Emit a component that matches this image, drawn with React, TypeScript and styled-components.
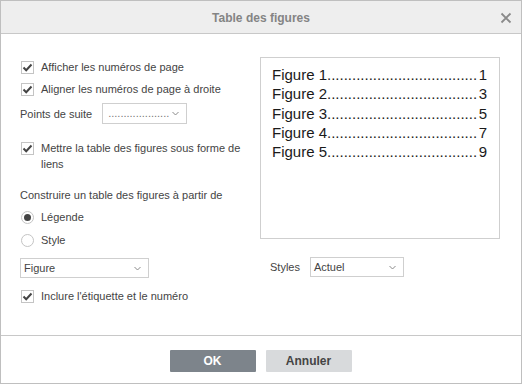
import React from "react";
import styled, { createGlobalStyle } from "styled-components";

const GlobalStyle = createGlobalStyle`
  html, body {
    margin: 0;
    padding: 0;
    background: #ffffff;
  }
  * {
    box-sizing: border-box;
  }
`;

const Dialog = styled.div`
  width: 522px;
  height: 384px;
  border: 1px solid #bfbfbf;
  display: flex;
  flex-direction: column;
  font-family: "Liberation Sans", Arial, sans-serif;
  font-size: 11px;
  color: #444444;
  background: #ffffff;
`;

const Header = styled.div`
  height: 33px;
  flex: none;
  background: #eeeeee;
  border-bottom: 1px solid #c8c8c8;
  position: relative;
  display: flex;
  align-items: center;
  justify-content: center;
`;

const Title = styled.div`
  font-size: 12px;
  font-weight: bold;
  color: #848484;
  margin-top: 2px;
`;

const CloseButton = styled.div`
  position: absolute;
  right: 9px;
  top: 11px;
  width: 12px;
  height: 12px;
  display: flex;
`;

const Body = styled.div`
  flex: 1;
  display: flex;
  padding: 23px 0 0 19px;
`;

const LeftColumn = styled.div`
  width: 240px;
  display: flex;
  flex-direction: column;
`;

const RightColumn = styled.div`
  width: 240px;
  display: flex;
  flex-direction: column;
`;

const Row = styled.div<{ $top?: number; $h?: number }>`
  display: flex;
  align-items: center;
  height: ${(p) => p.$h ?? 20}px;
  margin-top: ${(p) => p.$top ?? 0}px;
`;

const MultiRow = styled.div<{ $top?: number }>`
  display: flex;
  align-items: flex-start;
  margin-top: ${(p) => p.$top ?? 0}px;
`;

const Box = styled.span<{ $offset?: number }>`
  width: 13px;
  height: 13px;
  flex: none;
  border: 1px solid #c4c4c4;
  background: #ffffff;
  margin: ${(p) => p.$offset ?? 0}px 7px 0 1px;
  display: flex;
  align-items: center;
  justify-content: center;
`;

const Radio = styled.span`
  width: 13px;
  height: 13px;
  flex: none;
  border: 1px solid #c4c4c4;
  border-radius: 50%;
  background: #ffffff;
  margin-left: 1px;
  margin-right: 7px;
  display: flex;
  align-items: center;
  justify-content: center;
`;

const RadioDot = styled.span`
  width: 7px;
  height: 7px;
  border-radius: 50%;
  background: #444444;
`;

const LabelText = styled.span`
  line-height: 16px;
`;

const MultiText = styled.span`
  line-height: 16px;
  margin-top: -1px;
`;

const Caption = styled.div<{ $top?: number }>`
  line-height: 16px;
  margin-top: ${(p) => p.$top ?? 0}px;
`;

const FieldLabel = styled.span`
  margin-right: 10px;
`;

const Combo = styled.div<{ $w: number; $h?: number }>`
  width: ${(p) => p.$w}px;
  height: ${(p) => p.$h ?? 20}px;
  border: 1px solid #cfcfcf;
  background: #ffffff;
  display: flex;
  align-items: center;
  padding: 0 7px 0 3px;
  font-size: 11px;
  color: #444444;
`;

const ComboValue = styled.span`
  flex: 1;
  white-space: nowrap;
`;

const Leader = styled.span`
  flex: 1;
  color: #777777;
  padding-left: 2px;
  white-space: nowrap;
  margin-top: -1px;
`;

const Preview = styled.div`
  width: 240px;
  height: 182px;
  border: 1px solid #cfcfcf;
  padding: 7px 12px 0 11px;
  font-size: 15px;
  color: #1a1a1a;
`;

const PreviewLine = styled.div`
  display: flex;
  line-height: 19.3px;
  white-space: nowrap;
`;

const Dots = styled.span`
  flex: 1;
  white-space: nowrap;
`;

const StylesRow = styled.div`
  display: flex;
  align-items: center;
  height: 20px;
  margin-top: 18px;
  padding-left: 10px;
`;

const Footer = styled.div`
  height: 48px;
  flex: none;
  border-top: 1px solid #c8c8c8;
  display: flex;
  justify-content: center;
  align-items: flex-start;
  gap: 10px;
  padding-top: 14px;
  padding-right: 1px;
`;

const Button = styled.div<{ $primary?: boolean }>`
  width: 86px;
  height: 22px;
  display: flex;
  align-items: center;
  justify-content: center;
  font-size: 12px;
  font-weight: bold;
  border-radius: 1px;
  background: ${(p) => (p.$primary ? "#7d848b" : "#d8dadc")};
  color: ${(p) => (p.$primary ? "#ffffff" : "#444444")};
`;

const Check = () => (
  <svg width="11" height="11" viewBox="0 0 11 11">
    <path d="M1.5 5.5 L4.2 8.2 L9.5 2.5" fill="none" stroke="#444444" strokeWidth="2" />
  </svg>
);

const Chevron = () => (
  <svg width="7" height="5" viewBox="0 0 7 5">
    <path d="M0.5 1 L3.5 4 L6.5 1" fill="none" stroke="#8a8a8a" strokeWidth="1" />
  </svg>
);

const Checkbox = ({ label, top }: { label: string; top?: number }) => (
  <Row $top={top}>
    <Box>
      <Check />
    </Box>
    <LabelText>{label}</LabelText>
  </Row>
);

const RadioOption = ({ label, checked, top }: { label: string; checked?: boolean; top?: number }) => (
  <Row $top={top}>
    <Radio>{checked && <RadioDot />}</Radio>
    <LabelText>{label}</LabelText>
  </Row>
);

const figures = [
  { name: "Figure 1", page: "1" },
  { name: "Figure 2", page: "3" },
  { name: "Figure 3", page: "5" },
  { name: "Figure 4", page: "7" },
  { name: "Figure 5", page: "9" },
];

const DOTS = ".".repeat(36);

export default function App() {
  return (
    <>
      <GlobalStyle />
      <Dialog>
        <Header>
          <Title>Table des figures</Title>
          <CloseButton>
            <svg width="12" height="12" viewBox="0 0 12 12">
              <path d="M1.5 1.5 L10.5 10.5 M10.5 1.5 L1.5 10.5" stroke="#8a8a8a" strokeWidth="1.8" />
            </svg>
          </CloseButton>
        </Header>
        <Body>
          <LeftColumn>
            <Checkbox label="Afficher les numéros de page" />
            <Checkbox label="Aligner les numéros de page à droite" top={2} />
            <Row $top={4} $h={21}>
              <FieldLabel>Points de suite</FieldLabel>
              <Combo $w={85} $h={21}>
                <Leader>{".".repeat(20)}</Leader>
                <Chevron />
              </Combo>
            </Row>
            <MultiRow $top={17}>
              <Box $offset={1}>
                <Check />
              </Box>
              <MultiText>
                Mettre la table des figures sous forme de
                <br />
                liens
              </MultiText>
            </MultiRow>
            <Caption $top={15}>Construire un table des figures à partir de</Caption>
            <RadioOption label="Légende" checked top={4} />
            <RadioOption label="Style" top={3} />
            <Row $top={8}>
              <Combo $w={129}>
                <ComboValue>Figure</ComboValue>
                <Chevron />
              </Combo>
            </Row>
            <Checkbox label="Inclure l'étiquette et le numéro" top={8} />
          </LeftColumn>
          <RightColumn>
            <Preview>
              {figures.map((f) => (
                <PreviewLine key={f.name}>
                  <span>{f.name}</span>
                  <Dots>{DOTS}</Dots>
                  <span>{f.page}</span>
                </PreviewLine>
              ))}
            </Preview>
            <StylesRow>
              <FieldLabel>Styles</FieldLabel>
              <Combo $w={94}>
                <ComboValue>Actuel</ComboValue>
                <Chevron />
              </Combo>
            </StylesRow>
          </RightColumn>
        </Body>
        <Footer>
          <Button $primary>OK</Button>
          <Button>Annuler</Button>
        </Footer>
      </Dialog>
    </>
  );
}
